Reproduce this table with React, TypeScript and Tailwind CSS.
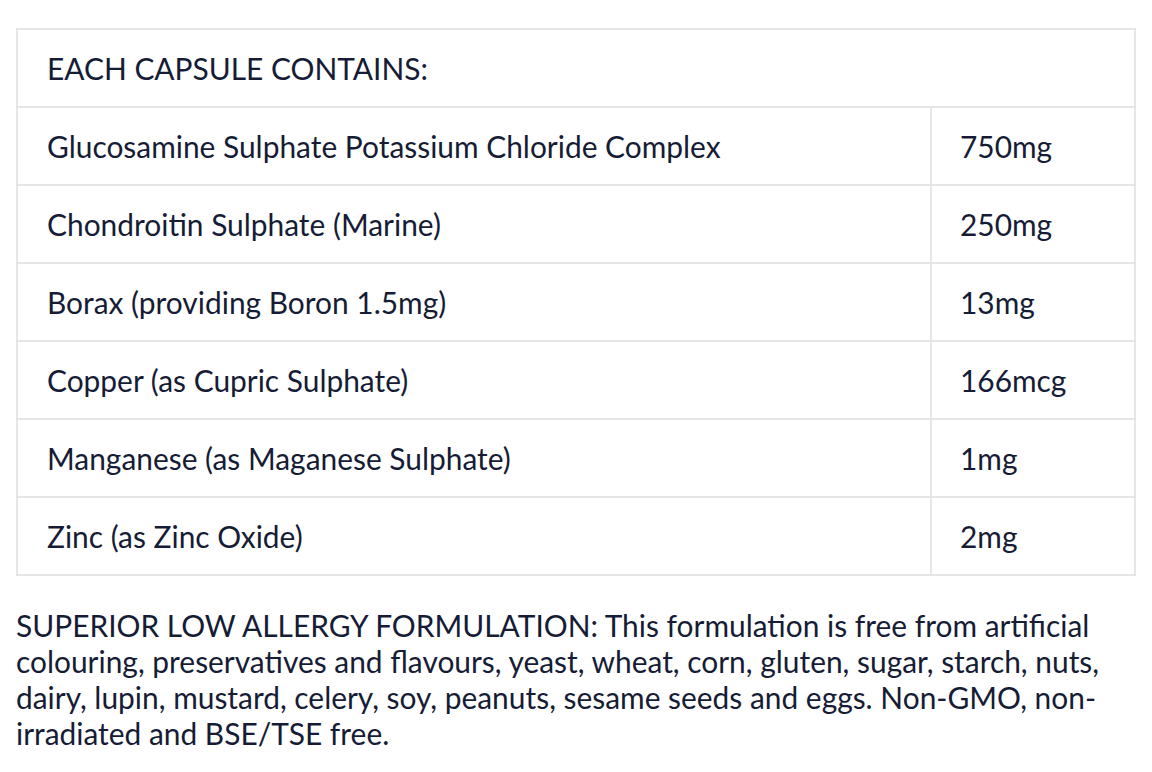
import React from "react";

const rows: [string, string][] = [
  ["Glucosamine Sulphate Potassium Chloride Complex", "750mg"],
  ["Chondroitin Sulphate (Marine)", "250mg"],
  ["Borax (providing Boron 1.5mg)", "13mg"],
  ["Copper (as Cupric Sulphate)", "166mcg"],
  ["Manganese (as Maganese Sulphate)", "1mg"],
  ["Zinc (as Zinc Oxide)", "2mg"],
];

export default function App() {
  return (
    <div
      className="w-[1152px] h-[772px] bg-white text-[#161c35] px-4 pt-7"
      style={{ fontFamily: "Lato, 'Noto Sans', sans-serif" }}
    >
      <table className="w-[1120px] border-collapse border-2 border-[#e6e6e6] text-[29.9px] leading-[36px]">
        <tbody>
          <tr className="h-[78px]">
            <td colSpan={2} className="border-2 border-[#e6e6e6] pl-[29px] align-middle">
              EACH CAPSULE CONTAINS:
            </td>
          </tr>
          {rows.map(([a, b]) => (
            <tr key={a} className="h-[78px]">
              <td className="w-[914px] border-2 border-[#e6e6e6] pl-[29px] align-middle">{a}</td>
              <td className="border-2 border-[#e6e6e6] pl-[28px] align-middle">{b}</td>
            </tr>
          ))}
        </tbody>
      </table>
      <p className="mt-[31px] w-[1090px] text-[29.9px] leading-[36px]">
        SUPERIOR LOW ALLERGY FORMULATION: This formulation is free from artificial colouring,
        preservatives and flavours, yeast, wheat, corn, gluten, sugar, starch, nuts, dairy, lupin,
        mustard, celery, soy, peanuts, sesame seeds and eggs. Non-GMO, non-irradiated and BSE/TSE
        free.
      </p>
    </div>
  );
}
